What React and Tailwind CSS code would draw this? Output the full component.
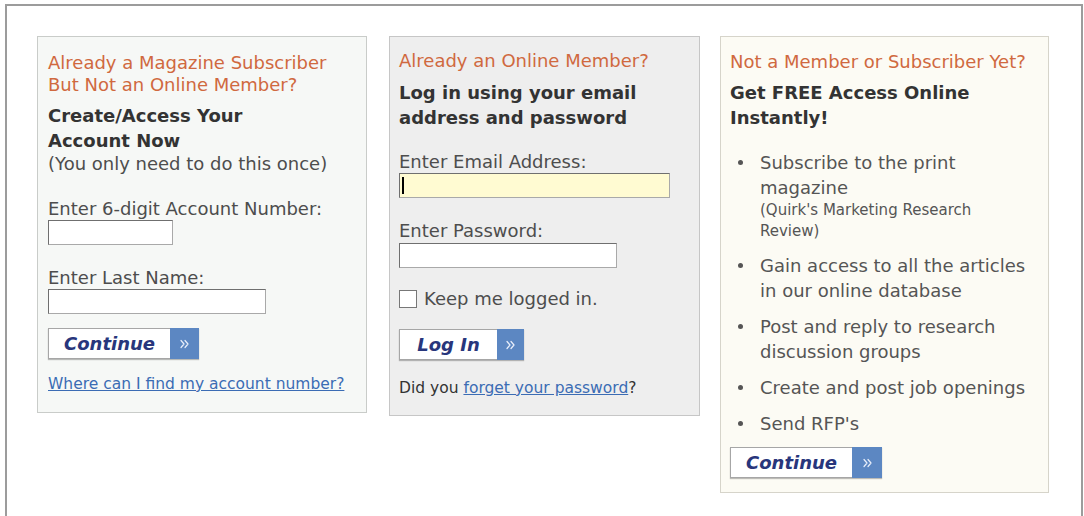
import React from 'react';

// Small double-chevron drawn on the blue tab of each action button
function Chevrons() {
  return (
    <svg width="11" height="10" viewBox="0 0 11 10" fill="none" aria-hidden="true">
      <path d="M2 1.5 L5 5 L2 8.5 M6 1.5 L9 5 L6 8.5" stroke="#e8eefa" strokeWidth="1.2" strokeLinecap="round" strokeLinejoin="round" />
    </svg>
  );
}

function ArrowButton({ label, faceClass, tabClass, className = '' }) {
  return (
    <button type="button" className={`flex h-[31px] items-stretch shadow-[0_1px_1px_rgba(0,0,0,0.25)] ${className}`}>
      <span className={`flex items-center justify-center border border-r-0 border-[#a6a6a6] bg-white text-[18px] font-bold italic text-[#28367c] ${faceClass}`}>
        {label}
      </span>
      <span className={`flex items-center justify-center bg-[#5c87c2] ${tabClass}`}>
        <Chevrons />
      </span>
    </button>
  );
}

function TextField({ className = '', bg = 'bg-white' }) {
  return (
    <input
      type="text"
      className={`block h-[25px] border border-[#a9a9a9] border-l-[#6f6f6f] border-t-[#6f6f6f] outline-none ${bg} ${className}`}
    />
  );
}

const perks = [
  { lines: ['Subscribe to the print', 'magazine'], note: ["(Quirk's Marketing Research", 'Review)'] },
  { lines: ['Gain access to all the articles', 'in our online database'] },
  { lines: ['Post and reply to research', 'discussion groups'] },
  { lines: ['Create and post job openings'] },
  { lines: ["Send RFP's"] },
];

export default function App() {
  return (
    <div className="min-h-[516px] bg-white font-['DejaVu_Sans',sans-serif] text-[18px] leading-[22px] text-[#4d4d4d]">
      <div className="ml-[5px] mt-[4px] flex h-[512px] w-[1078px] items-start border-2 border-b-0 border-[#9c9c9c] pl-[30px] pt-[30px]">
        {/* Subscriber signup */}
        <section className="w-[330px] border border-[#c9ccc9] bg-[#f6f8f6] pb-[18px] pl-[10px] pt-[15px]">
          <h2 className="whitespace-nowrap text-[#d0693f]">
            <span className="block">Already a Magazine Subscriber</span>
            <span className="block">But Not an Online Member?</span>
          </h2>
          <p className="mt-[7px] whitespace-nowrap font-bold leading-[25px] text-[#333]">
            <span className="block">Create/Access Your</span>
            <span className="block">Account Now</span>
          </p>
          <p className="whitespace-nowrap">(You only need to do this once)</p>
          <label className="mt-[23px] block whitespace-nowrap">Enter 6-digit Account Number:</label>
          <TextField className="w-[125px]" />
          <label className="mt-[22px] block whitespace-nowrap">Enter Last Name:</label>
          <TextField className="w-[218px]" />
          <ArrowButton label="Continue" faceClass="w-[122px]" tabClass="w-[29px]" className="mt-[14px]" />
          <a href="#" className="mt-[15px] block whitespace-nowrap text-[15.5px] leading-[20px] text-[#3b6cb4] underline">
            Where can I find my account number?
          </a>
        </section>

        {/* Member login */}
        <section className="ml-[22px] w-[311px] border border-[#c6c6c6] bg-[#eeeeee] pb-[17px] pl-[9px] pt-[13px]">
          <h2 className="whitespace-nowrap text-[#d0693f]">Already an Online Member?</h2>
          <p className="mt-[8px] whitespace-nowrap font-bold leading-[25px] text-[#333]">
            <span className="block">Log in using your email</span>
            <span className="block">address and password</span>
          </p>
          <label className="mt-[21px] block whitespace-nowrap">Enter Email Address:</label>
          <div className="relative w-[271px]">
            <TextField className="w-[271px]" bg="bg-[#fffbd2]" />
            <span className="absolute left-[3px] top-[4px] h-[17px] w-[2px] bg-black" />
          </div>
          <label className="mt-[22px] block whitespace-nowrap">Enter Password:</label>
          <TextField className="mt-[1px] h-[23px] w-[218px]" />
          <div className="mt-[20px] flex items-center gap-[7px]">
            <span className="block h-[18px] w-[18px] border border-[#777] bg-white" />
            <span className="whitespace-nowrap">Keep me logged in.</span>
          </div>
          <ArrowButton label="Log In" faceClass="w-[98px]" tabClass="w-[27px]" className="mt-[19px]" />
          <p className="mt-[18px] whitespace-nowrap text-[15.5px] leading-[20px] text-[#333]">
            Did you{' '}
            <a href="#" className="text-[#3b6cb4] underline">
              forget your password
            </a>
            ?
          </p>
        </section>

        {/* New visitor */}
        <section className="ml-[20px] w-[329px] border border-[#d6d4ca] bg-[#fcfbf4] pb-[14px] pl-[9px] pt-[14px]">
          <h2 className="whitespace-nowrap text-[#d0693f]">Not a Member or Subscriber Yet?</h2>
          <p className="mt-[7px] whitespace-nowrap font-bold leading-[25px] text-[#333]">
            <span className="block">Get FREE Access Online</span>
            <span className="block">Instantly!</span>
          </p>
          <ul className="mt-[20px] flex flex-col gap-[11px]">
            {perks.map((perk) => (
              <li key={perk.lines[0]} className="flex">
                <span className="w-[30px] shrink-0 pl-[8px] pt-[10px]">
                  <span className="block h-[5px] w-[5px] rounded-full bg-[#555]" />
                </span>
                <div className="whitespace-nowrap leading-[25px] text-[#555]">
                  {perk.lines.map((line) => (
                    <span key={line} className="block">{line}</span>
                  ))}
                  {perk.note &&
                    perk.note.map((line) => (
                      <span key={line} className="block text-[15px] leading-[21px]">{line}</span>
                    ))}
                </div>
              </li>
            ))}
          </ul>
          <ArrowButton label="Continue" faceClass="w-[122px]" tabClass="w-[30px]" className="mt-[11px]" />
        </section>
      </div>
    </div>
  );
}
